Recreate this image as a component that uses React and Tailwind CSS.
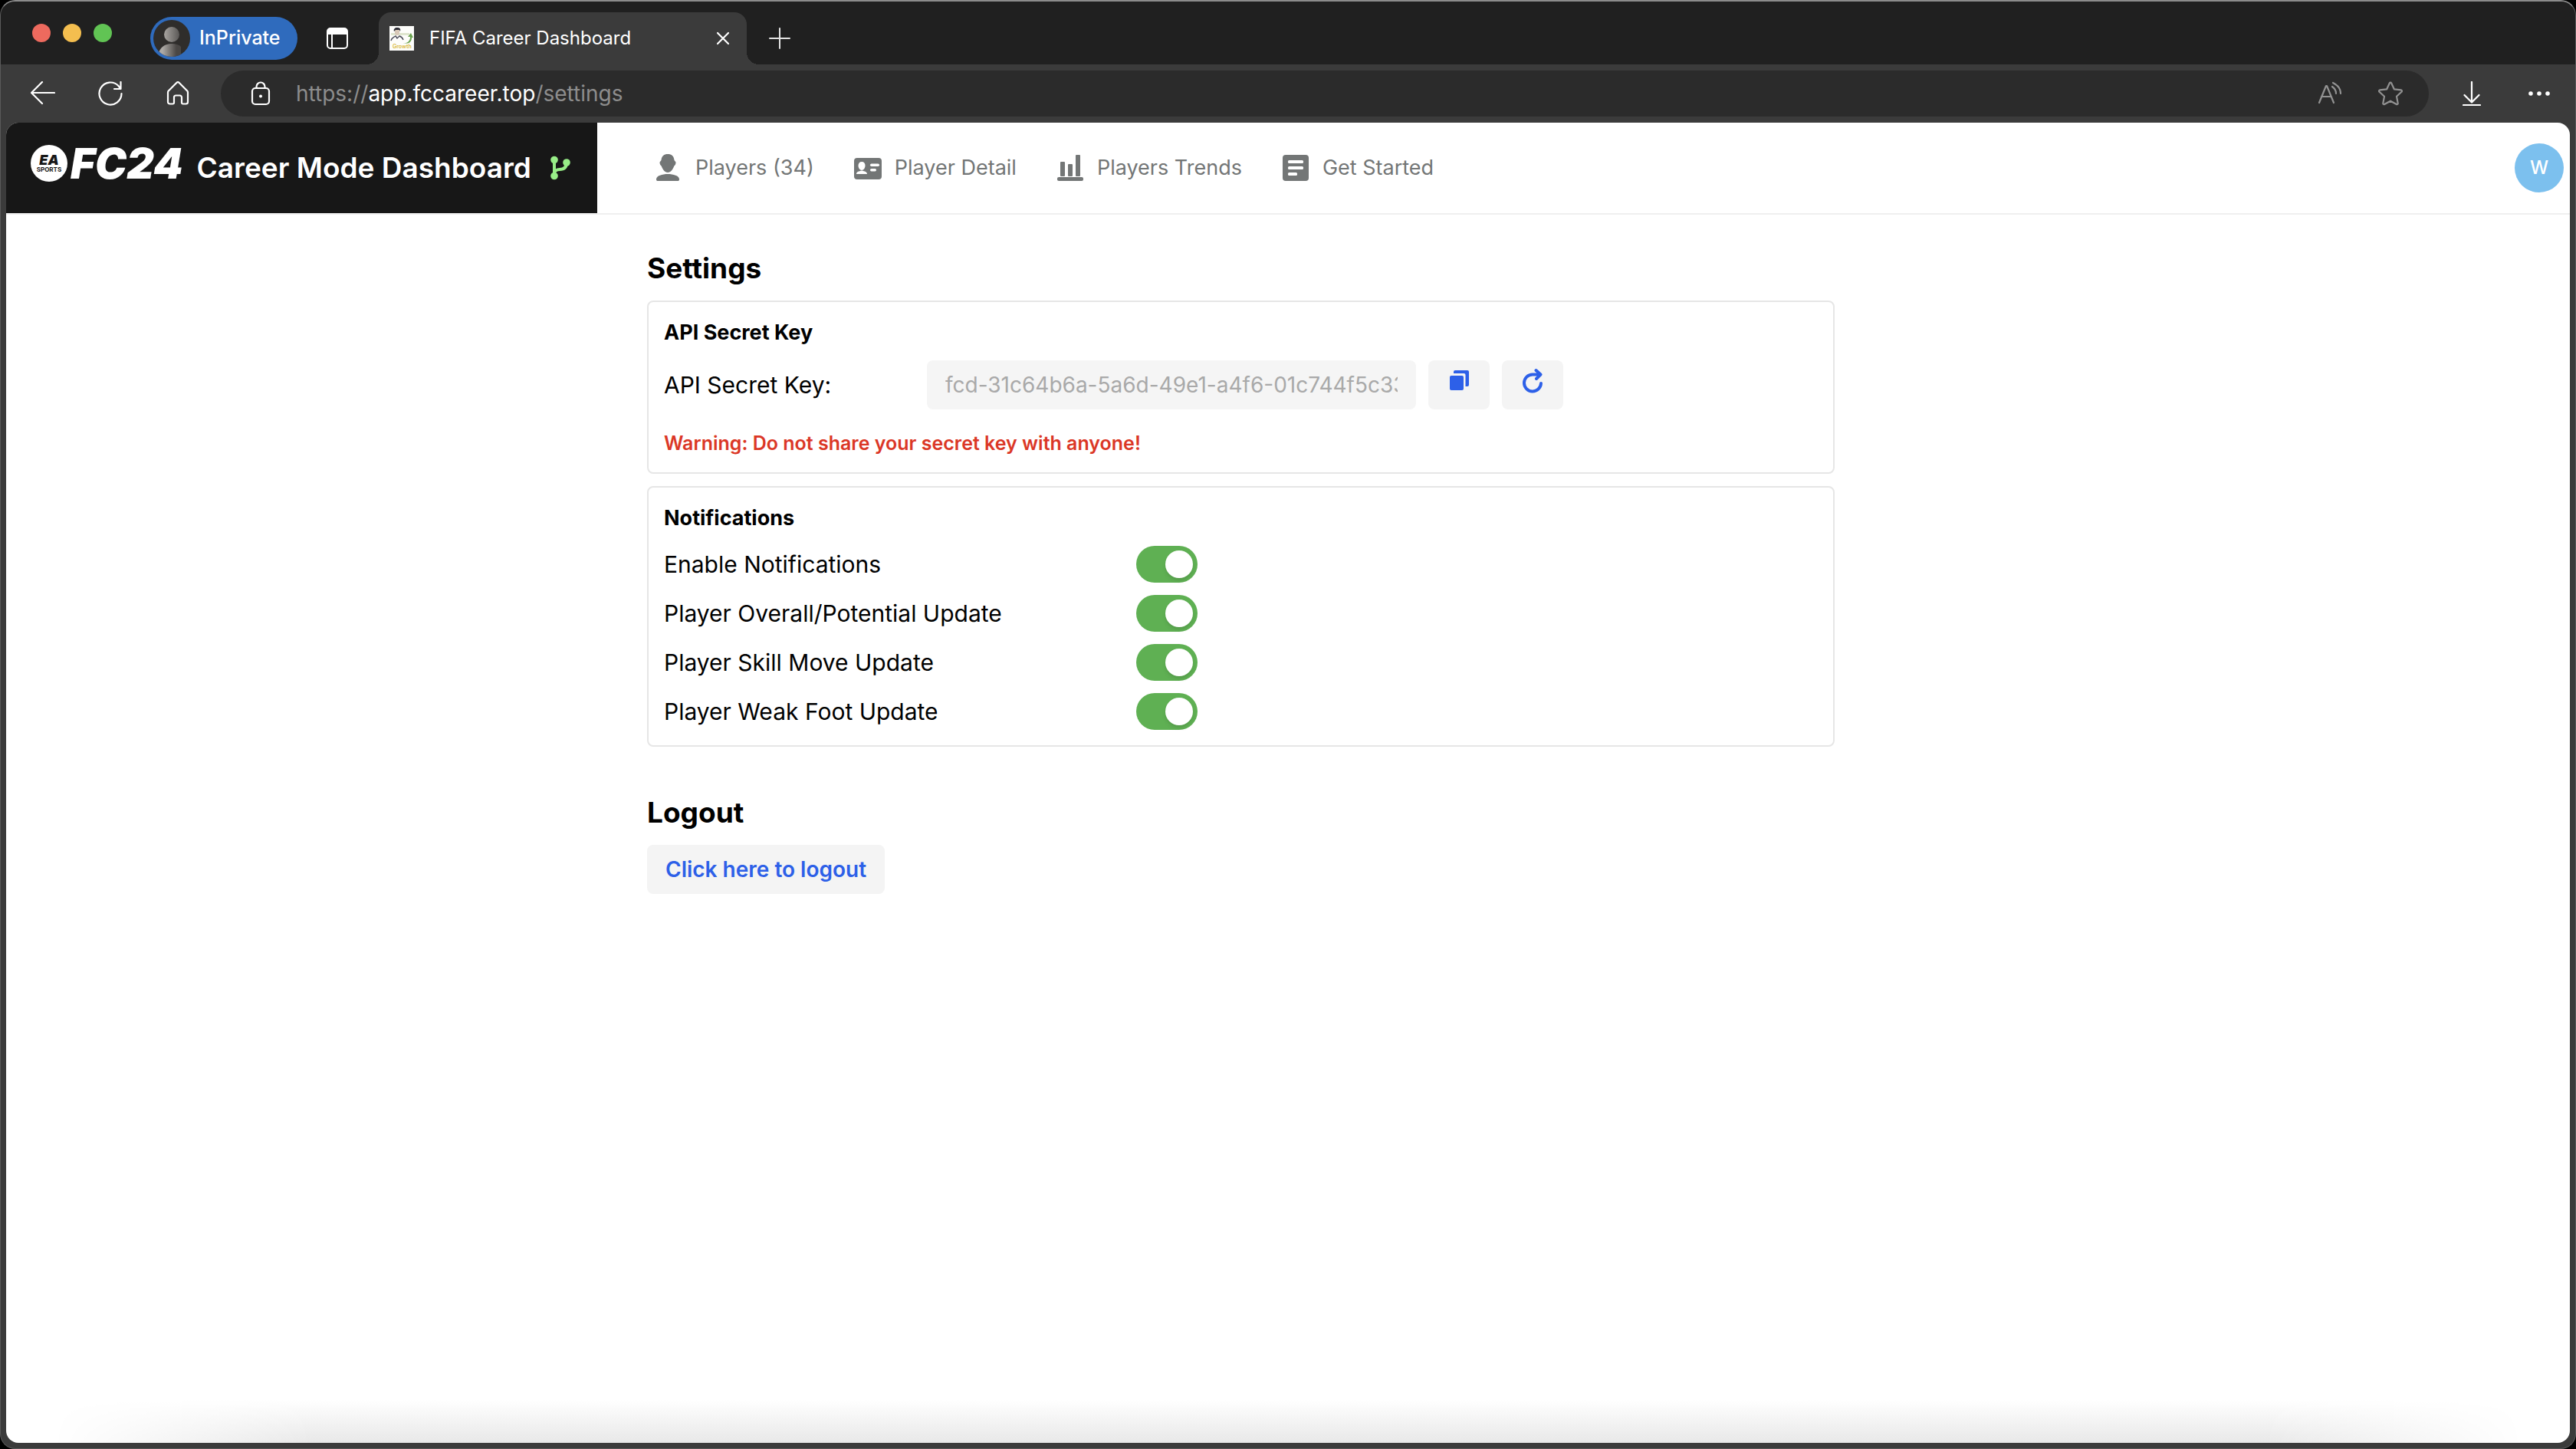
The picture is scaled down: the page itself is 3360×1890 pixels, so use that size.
import React from "react";

const line = { fill: "none", stroke: "currentColor", strokeLinecap: "round", strokeLinejoin: "round" };

function Svg({ w, h, className = "", children }) {
  return (
    <svg width={w} height={h} viewBox={`0 0 ${w} ${h}`} className={`shrink-0 ${className}`} aria-hidden="true">
      {children}
    </svg>
  );
}

function ProfileAvatar() {
  return (
    <Svg w={48} h={48} className="rounded-full">
      <defs>
        <linearGradient id="skin" x1="0" x2="1">
          <stop offset="0" stopColor="#a8a4a0" />
          <stop offset="1" stopColor="#5a5856" />
        </linearGradient>
        <linearGradient id="body" x1="0" x2="1">
          <stop offset="0.2" stopColor="#aeaaa6" />
          <stop offset="0.8" stopColor="#4a4745" />
        </linearGradient>
      </defs>
      <rect width="48" height="48" fill="#2f2d2b" />
      <circle cx="24" cy="19" r="10" fill="url(#skin)" />
      <path d="M6 46C8 36 15 31 24 31c5 0 9 1 12 4v13H6z" fill="url(#body)" />
    </Svg>
  );
}

function Favicon() {
  return (
    <Svg w={32} h={32}>
      <rect width="32" height="32" fill="#fdfdfb" />
      <rect x="2" y="9" width="24" height="3" fill="#dfe6cf" />
      <path d="M7 4c1-2 5-2 6 0v5c0 2-1 3-3 3s-3-1-3-3z" fill="#d8c8b8" />
      <path d="M6 7c-1-3 1-5 4-5s5 1 4 5l-1-2H8z" fill="#2c2c34" />
      <path d="M2 19c1-4 3-4 6-6l2 3 3-3c3 1 4 2 5 5" fill="none" stroke="#4a4a58" strokeWidth="1.4" />
      <path d="M18 22c6 1 9-3 9-8h-3l4-5 3 6h-2c0 6-4 9-11 7z" fill="#6aa34f" />
      <text x="4" y="29" fontFamily="Inter, sans-serif" fontSize="7" fontWeight="600" fill="#d8b93c">
        Growth
      </text>
    </Svg>
  );
}

function PersonIcon() {
  return (
    <Svg w={40} h={40}>
      <g fill="currentColor">
        <path d="M19 2c5 0 8 2.500 8.500 8l2 2.500c0 3-1 4-2.200 5C25.500 22 23 26 19 26s-6.500-4-8.300-8.500c-1.200-1-2.200-2-2.200-5l2-2.500C11 4.500 14 2 19 2z" />
        <path d="M4 35c0-5 8-7 15-7s15 2 15 7c0 1.500-.8 2-2 2H6c-1.200 0-2-.5-2-2z" />
      </g>
    </Svg>
  );
}

function IdIcon() {
  return (
    <Svg w={40} h={40}>
      <rect x="2" y="7" width="36" height="28" rx="4" fill="currentColor" />
      <g fill="#fff">
        <path d="M12 12c3 0 4.500 2 4.500 5S14.500 23 12 23s-4.500-3-4.500-6S9 12 12 12z" />
        <path d="M5 28c0-3 3-3.500 7-4.500 4 1 7 1.500 7 4.500z" />
        <rect x="23" y="14.500" width="12" height="3.500" rx="1.700" />
        <rect x="23" y="21" width="8" height="3.500" rx="1.700" />
      </g>
    </Svg>
  );
}

function BarsIcon() {
  return (
    <Svg w={40} h={40}>
      <g fill="currentColor">
        <rect x="7" y="12" width="6" height="19" rx="1" />
        <rect x="17" y="15" width="6" height="16" rx="1" />
        <rect x="27" y="3" width="6" height="28" rx="1" />
        <rect x="3" y="32" width="34" height="5" rx="2" />
      </g>
    </Svg>
  );
}

function DocIcon() {
  return (
    <Svg w={40} h={40}>
      <rect x="3" y="3" width="34" height="34" rx="4" fill="currentColor" />
      <g fill="#fff">
        <rect x="10" y="10" width="20" height="4" rx="1.500" />
        <rect x="10" y="18" width="20" height="4" rx="1.500" />
        <rect x="10" y="26" width="12" height="4" rx="1.500" />
      </g>
    </Svg>
  );
}

const navItems = [
  { label: "Players (34)", Icon: PersonIcon },
  { label: "Player Detail", Icon: IdIcon },
  { label: "Players Trends", Icon: BarsIcon },
  { label: "Get Started", Icon: DocIcon },
];

const notifications = [
  "Enable Notifications",
  "Player Overall/Potential Update",
  "Player Skill Move Update",
  "Player Weak Foot Update",
];

function TabStrip() {
  return (
    <div className="flex h-[82px] items-center bg-[#202020] pl-[41px]">
      <div className="mr-[50px] flex gap-4">
        <button aria-label="Close window" className="size-6 rounded-full bg-[#ed6a5e]" />
        <button aria-label="Minimize window" className="size-6 rounded-full bg-[#f4be4f]" />
        <button aria-label="Zoom window" className="size-6 rounded-full bg-[#61c454]" />
      </div>
      <div className="flex h-full items-center pt-3.5">
        <button className="flex h-14 w-48 items-center gap-3 rounded-full bg-[#2f6bbd] pl-1 text-[25px] font-medium text-white">
          <ProfileAvatar />
          InPrivate
        </button>
        <button aria-label="Tab actions" className="mr-10 ml-[38px] text-white">
          <Svg w={28} h={28}>
            <rect x="1" y="1" width="26" height="26" rx="4" {...line} strokeWidth="2" />
            <path d="M1 9V4a3 3 0 0 1 3-3h20a3 3 0 0 1 3 3v5z" fill="currentColor" />
            <path d="M7 9v18" {...line} strokeWidth="2" />
          </Svg>
        </button>
        <div className="relative flex h-full w-[480px] items-center rounded-t-2xl bg-[#3b3b3b] pr-[22px] pl-3.5 before:absolute before:bottom-0 before:-left-4 before:size-4 before:bg-[radial-gradient(circle_at_0_0,#202020_16px,#3b3b3b_16px)] after:absolute after:-right-4 after:bottom-0 after:size-4 after:bg-[radial-gradient(circle_at_100%_0,#202020_16px,#3b3b3b_16px)]">
          <Favicon />
          <span className="ml-5 flex-1 text-2xl text-white">FIFA Career Dashboard</span>
          <button aria-label="Close tab" className="text-white">
            <Svg w={18} h={18}>
              <path d="M2 2l14 14M16 2L2 16" {...line} strokeWidth="2.200" />
            </Svg>
          </button>
        </div>
        <button aria-label="New tab" className="ml-[29px] text-[#e4e4e4]">
          <Svg w={28} h={28}>
            <path d="M14 1v26M1 14h26" {...line} strokeWidth="2" />
          </Svg>
        </button>
      </div>
    </div>
  );
}

function Toolbar() {
  return (
    <div className="flex h-[76px] items-center pr-[31px] pl-[39px] text-white">
      <div className="mr-10 flex gap-14">
        <button aria-label="Back">
          <Svg w={32} h={32}>
            <path d="M31 15H1M15 1L1 15l14 14" {...line} strokeWidth="2.200" />
          </Svg>
        </button>
        <button aria-label="Refresh">
          <Svg w={32} h={32}>
            <path d="M30.500 16A14.500 14.500 0 1 1 26.500 6l2.500 3.500M29.500 1v9H21" {...line} strokeWidth="2.200" />
          </Svg>
        </button>
        <button aria-label="Home">
          <Svg w={32} h={32}>
            <path
              d="M3 14.500c0-1 .4-1.700 1.100-2.300L14.500 1.800c.9-.8 2.100-.8 3 0l10.400 10.400c.7.600 1.100 1.300 1.100 2.300V27a2.500 2.500 0 0 1-2.500 2.500h-4A1.500 1.500 0 0 1 21 28v-7a2.500 2.500 0 0 0-2.500-2.500h-5A2.500 2.500 0 0 0 11 21v7a1.500 1.500 0 0 1-1.500 1.500h-4A2.500 2.500 0 0 1 3 27z"
              {...line}
              strokeWidth="2.200"
            />
          </Svg>
        </button>
      </div>
      <div className="flex h-[60px] flex-1 items-center rounded-full bg-[#2b2b2b] pr-[34px] pl-9">
        <Svg w={32} h={32}>
          <rect x="5" y="9" width="22" height="21" rx="4" {...line} strokeWidth="2.200" />
          <path d="M10.500 9V7a5.500 5.500 0 0 1 11 0v2" {...line} strokeWidth="2.200" />
          <circle cx="16" cy="19.500" r="2" fill="currentColor" />
        </Svg>
        <div className="ml-[30px] flex-1 text-[28px] text-[#8d8d8d]">
          https://<span className="text-white">app.fccareer.top</span>/settings
        </div>
        <div className="flex gap-12 text-[#929292]">
          <button aria-label="Read aloud">
            <Svg w={32} h={32}>
              <path d="M3 28L12 6h1l9 22M6 20h13" {...line} strokeWidth="2.200" />
              <path d="M20 7c3 2 5 5 5 9M21 2c6 3 10 8 10 14" {...line} strokeWidth="2.200" />
            </Svg>
          </button>
          <button aria-label="Add to favorites">
            <Svg w={32} h={32}>
              <path
                d="M14.900 2.300c.5-1 1.700-1 2.200 0l3.700 8 8.900 1.100c1.200.1 1.600 1.500.8 2.300l-6.500 6.100 1.700 8.800c.2 1.100-.9 1.900-1.900 1.400L16 25.700 8.200 30c-1 .5-2.100-.3-1.900-1.400L8 19.800l-6.500-6.100c-.8-.8-.4-2.200.8-2.300l8.900-1.100z"
                {...line}
                strokeWidth="2.200"
              />
            </Svg>
          </button>
        </div>
      </div>
      <div className="ml-10 flex gap-14">
        <button aria-label="Downloads">
          <Svg w={32} h={32}>
            <path d="M16 1v26M6.500 18l9.500 9.500 9.500-9.500M5 31h22" {...line} strokeWidth="2.200" />
          </Svg>
        </button>
        <button aria-label="More">
          <Svg w={32} h={32}>
            <g fill="currentColor">
              <circle cx="5" cy="16" r="2.800" />
              <circle cx="16" cy="16" r="2.800" />
              <circle cx="27" cy="16" r="2.800" />
            </g>
          </Svg>
        </button>
      </div>
    </div>
  );
}

function AppHeader() {
  return (
    <header className="flex h-[120px] border-b-2 border-[#efefef]">
      <div className="flex w-[771px] items-center bg-[#171717] pl-8 text-white">
        <div className="mb-3 flex items-center gap-1">
          <div className="flex size-12 flex-col items-center justify-center rounded-full bg-white text-[#171717]">
            <span className="text-lg leading-4 font-black italic">EA</span>
            <span className="text-[8px] leading-2 font-bold">SPORTS</span>
          </div>
          <span className="text-[55px] leading-12 font-black italic">FC24</span>
        </div>
        <h1 className="ml-[18px] text-[37px] font-semibold whitespace-nowrap">Career Mode Dashboard</h1>
        <Svg w={28} h={32} className="ml-6 text-[#98ee88]">
          <path d="M6 6v20M22 9c0 7-4 9-9 9-4 0-7 2-7 6" {...line} strokeWidth="4" />
          <g fill="currentColor">
            <circle cx="6" cy="5.500" r="4.800" />
            <circle cx="22" cy="9" r="4.800" />
            <circle cx="6" cy="26.500" r="4.800" />
          </g>
        </Svg>
      </div>
      <nav className="ml-[73px] flex flex-1 items-center gap-[50px] text-[27px] text-[#737676]">
        {navItems.map(({ label, Icon }) => (
          <a key={label} href="#" className="flex items-center gap-[15px]">
            <Icon />
            {label}
          </a>
        ))}
      </nav>
      <button
        aria-label="Account"
        className="mr-2 flex size-16 items-center justify-center self-center rounded-full bg-[#7cc0ee] text-2xl font-medium text-white"
      >
        W
      </button>
    </header>
  );
}

function ApiCard() {
  return (
    <section className="rounded-lg border-2 border-[#e6e6e6] p-5">
      <h3 className="text-[27px] leading-10 font-bold">API Secret Key</h3>
      <div className="mt-4 flex items-center gap-4">
        <label htmlFor="api-key" className="w-[327px] text-[30px]">
          API Secret Key:
        </label>
        <input
          id="api-key"
          disabled
          defaultValue="fcd-31c64b6a-5a6d-49e1-a4f6-01c744f5c33"
          className="h-16 w-[638px] rounded-lg bg-[#f5f5f5] px-6 text-[28px] text-[#a9a9a9]"
        />
        <button aria-label="Copy key" className="flex h-16 w-20 items-start justify-center rounded-lg bg-[#f4f4f4] pt-2.5 text-[#2d60e8]">
          <Svg w={32} h={32}>
            <g fill="currentColor">
              <rect x="4" y="10" width="18" height="19" rx="2" />
              <path d="M9 5a2 2 0 0 1 2-2h16a2 2 0 0 1 2 2v17a2 2 0 0 1-2 2h-2.500V9a2 2 0 0 0-2-2H9z" />
            </g>
          </Svg>
        </button>
        <button aria-label="Regenerate key" className="flex h-16 w-20 items-start justify-center rounded-lg bg-[#f4f4f4] pt-2.5 text-[#2d60e8]">
          <Svg w={32} h={34}>
            <path d="M26 8.500H16A11 11 0 1 0 27 20M20.500 3l6 5.500-5.500 5.500" {...line} strokeWidth="4" />
          </Svg>
        </button>
      </div>
      <p className="mt-[26px] text-[25px] leading-9 font-semibold text-[#db3726]">
        Warning: Do not share your secret key with anyone!
      </p>
    </section>
  );
}

function NotificationsCard() {
  return (
    <section className="mt-4 rounded-lg border-2 border-[#e6e6e6] p-5">
      <h3 className="text-[27px] leading-10 font-bold">Notifications</h3>
      <div className="mt-4 flex flex-col gap-4">
        {notifications.map((label) => (
          <label key={label} className="flex h-12 items-center text-[30px]">
            <span className="w-[616px]">{label}</span>
            <input
              type="checkbox"
              role="switch"
              defaultChecked
              className="flex h-12 w-20 appearance-none items-center rounded-full bg-gray-300 px-1.5 before:size-9 before:rounded-full before:bg-white before:shadow-md checked:justify-end checked:bg-[#5fb053]"
            />
          </label>
        ))}
      </div>
    </section>
  );
}

export default function App() {
  return (
    <div className="flex min-h-screen flex-col bg-black font-[Inter,sans-serif]">
      <div className="flex flex-1 flex-col overflow-hidden rounded-[20px] border border-t-2 border-[#5a5a5a] border-t-[#8c8c8c] bg-[#3b3b3b]">
        <TabStrip />
        <Toolbar />
        <div className="mx-[7px] mb-[7px] flex flex-1 flex-col overflow-hidden rounded-2xl bg-white text-black">
          <AppHeader />
          <main className="ml-[25%] w-full max-w-[1549px] pt-[50px]">
            <h2 className="mb-[22px] text-[37px] leading-10 font-bold">Settings</h2>
            <ApiCard />
            <NotificationsCard />
            <h2 className="mt-[66px] mb-[22px] text-[37px] leading-10 font-bold">Logout</h2>
            <button className="h-16 rounded-lg bg-[#f4f4f4] px-6 text-[28px] font-semibold text-[#2d60e8]">
              Click here to logout
            </button>
          </main>
          <div className="mt-auto h-14 bg-linear-to-t from-[#e8e8e8] to-white [mask-image:linear-gradient(to_right,transparent_60px,black_400px,black_calc(100%-400px),transparent_calc(100%-60px))]" />
        </div>
      </div>
    </div>
  );
}
